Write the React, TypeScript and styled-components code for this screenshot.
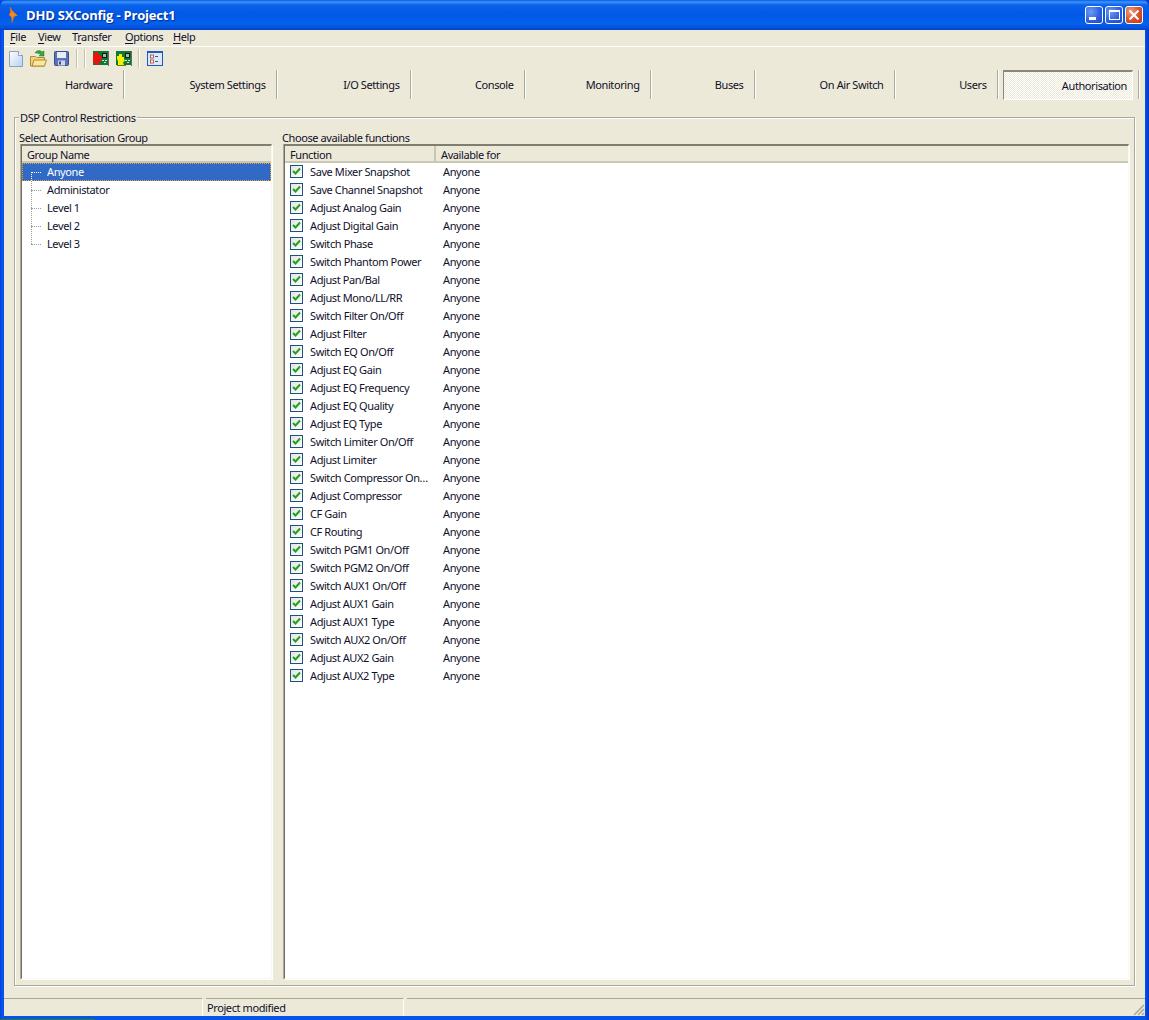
// DHD SXConfig - authorisation page
import styled, { createGlobalStyle } from "styled-components";

const GlobalStyle = createGlobalStyle`
    html, body {
        margin: 0;
        padding: 0;
        background: #0831d9;
    }
    #root {
        width: 1149px;
        height: 1020px;
        overflow: hidden;
    }
    * {
        box-sizing: border-box;
    }
`;

const Frame = styled.div`
    width: 1149px;
    height: 1020px;
    position: relative;
    display: flex;
    flex-direction: column;
    padding: 0 4px 4px;
    background: linear-gradient(90deg, #0a3ae0 0, #0655e8 2px, #0655e8 1145px, #0435c8 1149px);
    font-family: "Noto Sans", Tahoma, sans-serif;
    font-size: 11px;
    letter-spacing: -0.4px;
    color: #10102a;
    /* taskbar showing through below the window */
    &::after {
        content: "";
        position: absolute;
        left: 0;
        bottom: 0;
        width: 95px;
        height: 1px;
        background: #2f7d3a;
    }
`;

const TitleBar = styled.div`
    height: 30px;
    margin: 0 -4px;
    padding: 0 6px 0 9px;
    display: flex;
    align-items: center;
    gap: 8px;
    flex: none;
    border-radius: 7px 7px 0 0;
    background: linear-gradient(180deg, #0a5be0 0, #3c94fb 2px, #0a62ea 5px, #0258e6 14px, #0560ee 24px, #0450d8 28px, #0340c0 30px);
`;

const TitleText = styled.div`
    flex: 1;
    color: #fff;
    font-family: "Open Sans", sans-serif;
    font-size: 13px;
    font-weight: 700;
    letter-spacing: -0.2px;
    text-shadow: 1px 1px 1px #0a2a90;
`;

const WinButtons = styled.div`
    display: flex;
    gap: 2px;
`;

const WinButton = styled.div<{ $close?: boolean }>`
    width: 18px;
    height: 18px;
    border: 1px solid #fff;
    border-radius: 3px;
    background: ${(props) =>
        props.$close
            ? "radial-gradient(circle at 30% 30%, #f0a080, #d8502c 55%, #c03810)"
            : "radial-gradient(circle at 30% 30%, #6c9cf4, #2c5ce0 60%, #2048c8)"};
    display: flex;
    align-items: center;
    justify-content: center;
`;

const Client = styled.div`
    flex: 1;
    min-height: 0;
    display: flex;
    flex-direction: column;
    background: #ece9d8;
`;

const MenuBar = styled.div`
    height: 17px;
    flex: none;
    padding: 0 0 3px 6px;
    display: flex;
    align-items: center;
    border-bottom: 1px solid #fff;
`;

const MenuItem = styled.div<{ $w: number }>`
    width: ${(props) => props.$w}px;
    flex: none;
    u {
        text-underline-offset: 2px;
    }
`;

const ToolBar = styled.div`
    height: 23px;
    flex: none;
    display: flex;
    align-items: center;
`;

const ToolIcon = styled.div`
    width: 23px;
    height: 20px;
    display: flex;
    align-items: center;
    justify-content: center;
    flex: none;
`;

const ToolSep = styled.div`
    width: 2px;
    height: 19px;
    margin: 0 3px;
    flex: none;
    background: #c5c2b0;
    border-right: 1px solid #fff;
`;

const TabBar = styled.div`
    height: 30px;
    flex: none;
    display: flex;
    align-items: flex-start;
`;

const Tab = styled.div<{ $w: number }>`
    width: ${(props) => props.$w}px;
    height: 29px;
    flex: none;
    display: flex;
    align-items: center;
    justify-content: flex-end;
    padding: 0 11.5px 1px 0;
    border-right: 1px solid #fff;
    box-shadow: inset -1px 0 0 #aca899;
`;

const ActiveTab = styled.div`
    width: 130px;
    height: 30px;
    margin-left: 4px;
    margin-right: 5px;
    flex: none;
    display: flex;
    align-items: center;
    justify-content: flex-end;
    padding-right: 5px;
    border-style: solid;
    border-width: 2px 1px 1px 1px;
    border-color: #8a8778 #fff #fff #8a8778;
    background: repeating-conic-gradient(#ece9d8 0 25%, #fff 0 50%) 0 0 / 2px 2px;
`;

const TabEnd = styled.div`
    width: 2px;
    height: 29px;
    flex: none;
    background: linear-gradient(90deg, #aca899 50%, #fff 50%);
`;

const Main = styled.div`
    flex: 1;
    min-height: 0;
    padding: 10px 10px 12px;
    display: flex;
`;

const GroupBox = styled.fieldset`
    flex: 1;
    min-width: 0;
    margin: 0;
    padding: 6px 6px 6px 4px;
    border: 1px solid #aca899;
    box-shadow: inset 1px 1px 0 #fff, 1px 1px 0 #fff;
    display: grid;
    grid-template-columns: 253px 847px;
    column-gap: 10px;
`;

const GroupTitle = styled.legend`
    margin-left: 0;
    padding: 1px 1px 0;
    line-height: 14px;
    background: #ece9d8;
`;

const Column = styled.div`
    display: flex;
    flex-direction: column;
    min-height: 0;
`;

const ColumnLabel = styled.div`
    height: 13px;
    line-height: 13px;
`;

const ListPanel = styled.div`
    flex: 1;
    min-height: 0;
    margin-left: 2px;
    background: #fff;
    border-style: solid;
    border-width: 2px 1px 1px 1px;
    border-color: #807e70 #f8f7f0 #f8f7f0 #716f64;
    box-shadow: -1px 0 0 #aca899, 1px 1px 0 #fff;
`;

const HeaderRow = styled.div`
    height: 17px;
    display: flex;
    background: #ece9d8;
    border-bottom: 2px solid #c9c6b4;
    line-height: 17px;
`;

const HeaderCell = styled.div<{ $w?: number }>`
    flex: ${(props) => (props.$w ? `0 0 ${props.$w}px` : "1")};
    padding-left: 5px;
    border-right: ${(props) => (props.$w ? "2px solid #c9c6b4" : "none")};
`;

const TreeRows = styled.div`
    position: relative;
    &::before {
        content: "";
        position: absolute;
        left: 9px;
        top: 9px;
        height: 72px;
        border-left: 1px dotted #9a9a9a;
    }
`;

const TreeRow = styled.div<{ $selected?: boolean }>`
    height: 18px;
    line-height: 17px;
    padding-left: 25px;
    position: relative;
    color: ${(props) => (props.$selected ? "#fff" : "inherit")};
    background: ${(props) => (props.$selected ? "#316ac5" : "transparent")};
    outline: ${(props) => (props.$selected ? "1px dotted #e8a040" : "none")};
    outline-offset: -1px;
    &::before {
        content: "";
        position: absolute;
        left: 9px;
        top: 9px;
        width: 10px;
        border-top: 1px dotted ${(props) => (props.$selected ? "#fff" : "#9a9a9a")};
    }
    &::after {
        content: "";
        position: absolute;
        left: 9px;
        top: 9px;
        height: 9px;
        border-left: 1px dotted ${(props) => (props.$selected ? "#fff" : "transparent")};
    }
`;

const FuncRow = styled.div`
    height: 18px;
    display: grid;
    grid-template-columns: 20px 133px 1fr;
    align-items: center;
    line-height: 18px;
    padding-left: 5px;
`;

const CheckBox = styled.div`
    width: 13px;
    height: 13px;
    margin-bottom: 2px;
    border: 1px solid #1c5180;
    background: linear-gradient(135deg, #e4e4de, #fff);
    display: flex;
    align-items: center;
    justify-content: center;
`;

const FuncName = styled.div`
    white-space: nowrap;
    overflow: hidden;
`;

const StatusBar = styled.div`
    height: 18px;
    flex: none;
    display: flex;
    gap: 3px;
    position: relative;
`;

const StatusCell = styled.div<{ $w?: number }>`
    flex: ${(props) => (props.$w ? `0 0 ${props.$w}px` : "1")};
    border-top: 1px solid #aca899;
    border-right: ${(props) => (props.$w ? "1px solid #fff" : "none")};
    padding-left: 1px;
    line-height: 17px;
`;

const Grip = styled.svg`
    position: absolute;
    right: 0;
    bottom: 0;
`;

const functions = [
    "Save Mixer Snapshot",
    "Save Channel Snapshot",
    "Adjust Analog Gain",
    "Adjust Digital Gain",
    "Switch Phase",
    "Switch Phantom Power",
    "Adjust Pan/Bal",
    "Adjust Mono/LL/RR",
    "Switch Filter On/Off",
    "Adjust Filter",
    "Switch EQ On/Off",
    "Adjust EQ Gain",
    "Adjust EQ Frequency",
    "Adjust EQ Quality",
    "Adjust EQ Type",
    "Switch Limiter On/Off",
    "Adjust Limiter",
    "Switch Compressor On…",
    "Adjust Compressor",
    "CF Gain",
    "CF Routing",
    "Switch PGM1 On/Off",
    "Switch PGM2 On/Off",
    "Switch AUX1 On/Off",
    "Adjust AUX1 Gain",
    "Adjust AUX1 Type",
    "Switch AUX2 On/Off",
    "Adjust AUX2 Gain",
    "Adjust AUX2 Type",
];

const groups = ["Anyone", "Administator", "Level 1", "Level 2", "Level 3"];

// width includes the separator on the right
const tabs = [
    { name: "Hardware", w: 121 },
    { name: "System Settings", w: 153 },
    { name: "I/O Settings", w: 134 },
    { name: "Console", w: 114 },
    { name: "Monitoring", w: 126 },
    { name: "Buses", w: 104 },
    { name: "On Air Switch", w: 140 },
    { name: "Users", w: 103 },
];

function BoardIcon({ yellow }: { yellow?: boolean }) {
    return (
        <svg width="16" height="15" viewBox="0 0 16 15">
            <rect x="0" y="0" width="15" height="14" fill="#0a7a34" />
            <rect x="15" y="0" width="1" height="15" fill="#6a6a60" />
            <rect x="9" y="2" width="5" height="5" fill="#0c1a10" />
            <rect x="10" y="3" width="3" height="3" fill="#a8b8b0" />
            <rect x="9" y="9" width="2" height="1" fill="#e0e0e0" />
            <rect x="12" y="9" width="2" height="1" fill="#e0e0e0" />
            <rect x="11" y="11" width="2" height="1" fill="#e0e0e0" />
            {yellow ? (
                <>
                    <rect x="1" y="14" width="9" height="1" fill="#7a7a10" />
                    <path d="M1 5h2V3h3v3h2v2l1 2-2 1 1 3H2v-4L1 8z" fill="#f6f000" />
                </>
            ) : (
                <path d="M0 2h3V1h2v2h2v2h2v3h-1v3H6v3H2v-2H0z" fill="#ee1111" />
            )}
        </svg>
    );
}

function App() {
    return (
        <Frame>
            <GlobalStyle />
            <TitleBar>
                <svg width="9" height="16" viewBox="0 0 9 16">
                    <path d="M1 0l2.5 4 5 4.5-3.5 1-2 6.5-.5-6L0 8l1.5-3z" fill="#f58a1a" stroke="#d06a10" strokeWidth="0.5" />
                </svg>
                <TitleText>DHD SXConfig - Project1</TitleText>
                <WinButtons>
                    <WinButton>
                        <svg width="14" height="14" viewBox="0 0 14 14">
                            <rect x="2" y="9" width="7" height="3" fill="#fff" />
                        </svg>
                    </WinButton>
                    <WinButton>
                        <svg width="14" height="14" viewBox="0 0 14 14">
                            <rect x="2.5" y="2.5" width="10" height="9" fill="none" stroke="#fff" strokeWidth="1" />
                            <rect x="2" y="2" width="11" height="2" fill="#fff" />
                        </svg>
                    </WinButton>
                    <WinButton $close>
                        <svg width="14" height="14" viewBox="0 0 14 14">
                            <path d="M2.5 2.5l9 9M11.5 2.5l-9 9" stroke="#fff" strokeWidth="2" />
                        </svg>
                    </WinButton>
                </WinButtons>
            </TitleBar>
            <Client>
                <MenuBar>
                    <MenuItem $w={28}><u>F</u>ile</MenuItem>
                    <MenuItem $w={34}><u>V</u>iew</MenuItem>
                    <MenuItem $w={53}>T<u>r</u>ansfer</MenuItem>
                    <MenuItem $w={48}><u>O</u>ptions</MenuItem>
                    <MenuItem $w={30}><u>H</u>elp</MenuItem>
                </MenuBar>
                <ToolBar>
                    <ToolIcon>
                        <svg width="14" height="16" viewBox="0 0 14 16">
                            <defs>
                                <linearGradient id="doc" x1="0" y1="0" x2="1" y2="1">
                                    <stop offset="0" stopColor="#ffffff" />
                                    <stop offset="1" stopColor="#b8d0f0" />
                                </linearGradient>
                            </defs>
                            <path d="M.5.5h9l4 4v11H.5z" fill="url(#doc)" stroke="#8aa0c8" />
                            <path d="M9.5.5v4h4" fill="#fff" stroke="#8aa0c8" />
                        </svg>
                    </ToolIcon>
                    <ToolIcon>
                        <svg width="17" height="17" viewBox="0 0 17 17">
                            <path d="M.5 6.5h5l1 1h8v8.5H.5z" fill="#f4d37c" stroke="#b08a30" />
                            <path d="M2 16l2-6h12.5l-2 6z" fill="#fbe69c" stroke="#b08a30" />
                            <path d="M5 3c2-3 5-3 7-1l2-1v5h-5l1.5-1.5C9 3 7 3 5 3z" fill="#38a838" stroke="#1e7a1e" strokeWidth="0.5" />
                        </svg>
                    </ToolIcon>
                    <ToolIcon>
                        <svg width="15" height="15" viewBox="0 0 15 15">
                            <rect x="0.5" y="0.5" width="14" height="14" rx="1" fill="#5a72b8" stroke="#3a4c90" />
                            <rect x="3" y="1" width="9" height="6" fill="#e8ecf4" />
                            <rect x="4" y="9.5" width="7" height="5" fill="#d0d6e8" />
                            <rect x="5" y="10.5" width="2" height="3" fill="#3a4c90" />
                        </svg>
                    </ToolIcon>
                    <ToolSep />
                    <ToolSep />
                    <ToolIcon>
                        <BoardIcon />
                    </ToolIcon>
                    <ToolIcon>
                        <BoardIcon yellow />
                    </ToolIcon>
                    <ToolSep />
                    <ToolIcon>
                        <svg width="16" height="15" viewBox="0 0 16 15">
                            <rect x="0.5" y="0.5" width="15" height="14" fill="#dfe8f6" stroke="#1a5cc0" />
                            <rect x="0" y="0" width="16" height="2" fill="#1a5cc0" />
                            <rect x="3.5" y="4" width="3" height="3" fill="#fff" stroke="#a04030" strokeWidth="0.8" />
                            <rect x="3.5" y="9" width="3" height="3" fill="#fff" stroke="#a04030" strokeWidth="0.8" />
                            <path d="M8 5.5h3M8 10.5h3" stroke="#505870" />
                        </svg>
                    </ToolIcon>
                </ToolBar>
                <TabBar>
                    {tabs.map((tab) => (
                        <Tab key={tab.name} $w={tab.w}>{tab.name}</Tab>
                    ))}
                    <ActiveTab>Authorisation</ActiveTab>
                    <TabEnd />
                </TabBar>
                <Main>
                    <GroupBox>
                        <GroupTitle>DSP Control Restrictions</GroupTitle>
                        <Column>
                            <ColumnLabel>Select Authorisation Group</ColumnLabel>
                            <ListPanel>
                                <HeaderRow>
                                    <HeaderCell>Group Name</HeaderCell>
                                </HeaderRow>
                                <TreeRows>
                                    {groups.map((group, i) => (
                                        <TreeRow key={group} $selected={i === 0}>{group}</TreeRow>
                                    ))}
                                </TreeRows>
                            </ListPanel>
                        </Column>
                        <Column>
                            <ColumnLabel>Choose available functions</ColumnLabel>
                            <ListPanel>
                                <HeaderRow>
                                    <HeaderCell $w={151}>Function</HeaderCell>
                                    <HeaderCell>Available for</HeaderCell>
                                </HeaderRow>
                                {functions.map((name) => (
                                    <FuncRow key={name}>
                                        <CheckBox>
                                            <svg width="9" height="9" viewBox="0 0 9 9">
                                                <path d="M1 4l2.5 2.5L8 1.5" fill="none" stroke="#21a121" strokeWidth="2" />
                                            </svg>
                                        </CheckBox>
                                        <FuncName>{name}</FuncName>
                                        <div>Anyone</div>
                                    </FuncRow>
                                ))}
                            </ListPanel>
                        </Column>
                    </GroupBox>
                </Main>
                <StatusBar>
                    <StatusCell $w={199} />
                    <StatusCell $w={198}>Project modified</StatusCell>
                    <StatusCell />
                    <Grip width="12" height="12" viewBox="0 0 12 12">
                        <path d="M11 1L1 11M11 5L5 11M11 9L9 11" stroke="#aca899" strokeWidth="1.5" />
                    </Grip>
                </StatusBar>
            </Client>
        </Frame>
    );
}

export default App;
